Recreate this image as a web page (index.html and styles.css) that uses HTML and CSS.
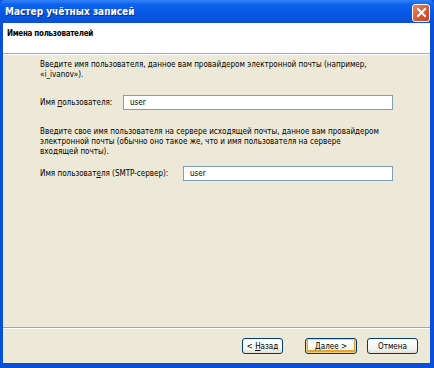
FILE: index.html
```html
<!DOCTYPE html>
<html lang="ru">

<head>
  <meta charset="UTF-8">
  <title>Мастер учётных записей</title>
  <link rel="stylesheet" href="styles.css">
</head>

<body>
  <div class="window">
    <!-- Заголовок окна -->
    <div class="titlebar">
      <span class="title">Мастер учётных записей</span>
      <span class="close">
        <svg width="11" height="11" viewBox="0 0 11 11">
          <path d="M2 2 L9 9 M9 2 L2 9" stroke="#fff" stroke-width="2" stroke-linecap="square" />
        </svg>
      </span>
    </div>

    <div class="frame">
      <div class="header">Имена пользователей</div>

      <div class="body">
        <p>Введите имя пользователя, данное вам провайдером электронной почты (например,<br>«i_ivanov»).</p>
        <div class="field">
          <label for="user">Имя <u>п</u>ользователя:</label>
          <input type="text" id="user" value="user" class="input-first">
        </div>

        <p>Введите свое имя пользователя на сервере исходящей почты, данное вам провайдером<br>электронной почты (обычно оно такое же, что и имя пользователя на сервере<br>входящей почты).</p>
        <div class="field field-smtp">
          <label for="smtp">Имя пользоват<u>е</u>ля (SMTP-сервер):</label>
          <input type="text" id="smtp" value="user" class="input-second">
        </div>
      </div>

      <div class="footer">
        <button type="button" class="back">&lt; <u>Н</u>азад</button>
        <button type="button" class="default"><u>Д</u>алее &gt;</button>
        <button type="button" class="cancel">Отмена</button>
      </div>
    </div>
  </div>
</body>

</html>
```

FILE: styles.css
```css
body {
  margin: 0;
  padding: 0;
  font-family: "DejaVu Sans Condensed", "DejaVu Sans", sans-serif;
  font-size: 8px;
  color: #000;
  background: #ece9d8;
}

.window {
  width: 434px;
  height: 368px;
  display: flex;
  flex-direction: column;
  background: #0a4fd8;
}

.titlebar {
  height: 23px;
  display: flex;
  align-items: center;
  justify-content: space-between;
  padding: 0 4px 0 5px;
  background: linear-gradient(#3383f8, #0d62ec 20%, #0656e4 60%, #0a50d4);
  border-radius: 5px 5px 0 0;
}

.title {
  color: #fff;
  font-family: "DejaVu Sans Condensed", "DejaVu Sans", sans-serif;
  font-weight: bold;
  font-size: 10px;
  text-shadow: 1px 1px 0 #0a2e8a;
}

.close {
  width: 16px;
  height: 16px;
  margin-top: 2px;
  display: flex;
  align-items: center;
  justify-content: center;
  border: 1px solid #fff;
  border-radius: 3px;
  background: linear-gradient(135deg, #e8876a, #d9552f 60%, #c44320);
}

.frame {
  flex: 1;
  display: flex;
  flex-direction: column;
  margin: 0 4px 5px 3px;
  background: #ece9d8;
}

.header {
  height: 31px;
  padding: 6px 0 0 4px;
  box-sizing: border-box;
  background: #fff;
  font-weight: bold;
  letter-spacing: -0.3px;
  border-bottom: 1px solid #aca899;
  box-shadow: 0 1px 0 #fff;
}

.body {
  flex: 1;
  padding: 6px 36px 0 37px;
  line-height: 10px;
}

.body p {
  margin: 0;
}

.field {
  display: flex;
  align-items: center;
  margin: 15px 0 17px;
}

.field-smtp {
  margin-top: 9px;
}

.field label {
  width: 83px;
}

input {
  height: 15px;
  box-sizing: border-box;
  padding: 0 6px;
  border: 1px solid #7f9db9;
  background: #fff;
  font: inherit;
}

.input-first {
  width: 270px;
}

.field-smtp label {
  width: 143px;
}

.input-second {
  width: 210px;
}

.footer {
  display: flex;
  justify-content: flex-end;
  gap: 10px;
  padding: 10px 12px 0 0;
  height: 36px;
  box-sizing: border-box;
  border-top: 1px solid #aca899;
  box-shadow: inset 0 1px 0 #fff;
}

button {
  height: 16px;
  padding: 0;
  width: 41px;
  font: inherit;
  background: linear-gradient(#fff, #f4f4f0 70%, #e3e0d5);
  border: 1px solid #003c74;
  border-radius: 3px;
}

.back {
  margin-right: 12px;
}

.default {
  width: 52px;
  box-shadow: inset 0 0 0 1px #f0d080, inset 0 -1px 0 2px #e5a535;
}

.cancel {
  width: 51px;
}
```
